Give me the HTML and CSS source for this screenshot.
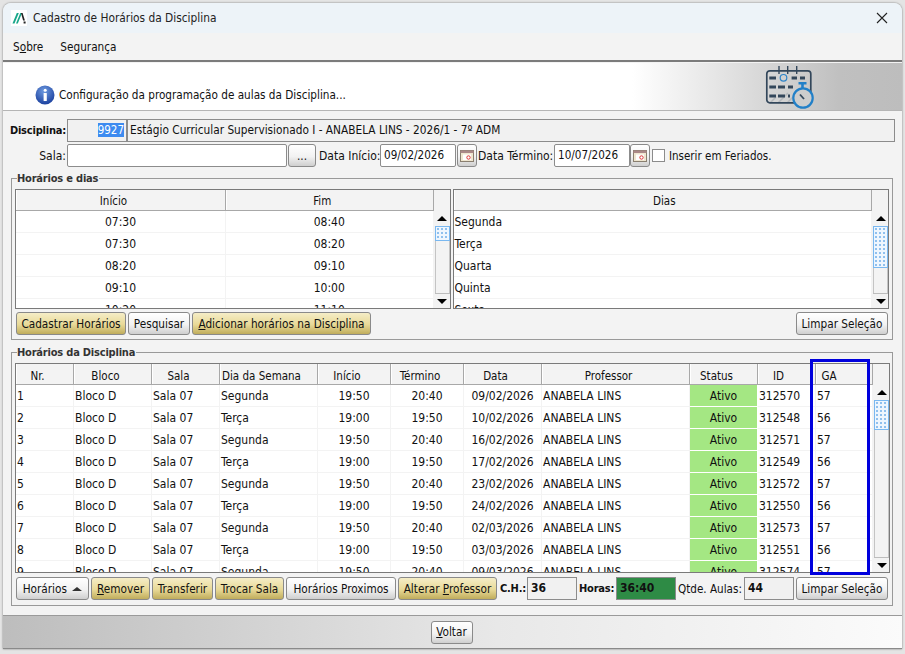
FILE: index.html
```html
<!DOCTYPE html>
<html lang="pt-BR">
<head>
<meta charset="utf-8">
<title>Cadastro de Horários da Disciplina</title>
<link rel="stylesheet" href="styles.css">
</head>
<body>
<div class="win">
  <header class="title">
    <svg class="logo" width="16" height="16" viewBox="0 0 16 16"><path d="M1.500 13.500 5.800 3h2L3.500 13.500z" fill="#17a689"/><path d="M5 13.500 9.300 3h1.700L6.800 13.500z" fill="#17a689"/><path d="M10 3h1.600l2.300 7.500h-1.800z" fill="#222"/><rect x="12.600" y="11.500" width="2" height="2" fill="#222"/></svg>
    <span class="title-text">Cadastro de Horários da Disciplina</span>
    <svg class="close" width="12" height="12" viewBox="0 0 12 12"><path d="M1 1 11 11M11 1 1 11" stroke="#222" stroke-width="1.100" fill="none"/></svg>
  </header>
  <nav class="menu"><span>S<u>o</u>bre</span><span>Segurança</span></nav>
  <section class="banner">
    <svg class="info" width="20" height="20" viewBox="0 0 20 20"><defs><radialGradient id="ig" cx="45%" cy="30%" r="75%"><stop offset="0" stop-color="#6f9be0"/><stop offset="1" stop-color="#153a9a"/></radialGradient></defs><circle cx="10" cy="10" r="9.500" fill="url(#ig)"/><circle cx="10.200" cy="5.300" r="1.500" fill="#fff"/><rect x="8.600" y="8" width="3.200" height="8" rx=".6" fill="#fff"/></svg>
    <span class="banner-text">Configuração da programação de aulas da Disciplina...</span>
    <svg class="cal-art" width="50" height="44" viewBox="0 0 50 44">
      <path d="M5 38 11 32M13 38 23 28M22 38 30 30" stroke="#b4b8bb" stroke-width="1.500" fill="none"/>
      <rect x="1.800" y="5.800" width="44" height="32" rx="3" fill="none" stroke="#33475b" stroke-width="1.700"/>
      <path d="M14 1v8M22.700 1v8M31.700 1v8" stroke="#33475b" stroke-width="1.400" fill="none"/>
      <g fill="#33475b"><rect x="4.300" y="11.500" width="6.700" height="3"/><rect x="26.600" y="11.500" width="5.400" height="3"/><rect x="35" y="11.500" width="5" height="3"/><rect x="4.300" y="20.500" width="6.700" height="3"/><rect x="13" y="20.500" width="7" height="3"/><rect x="23" y="20.500" width="5" height="3"/><rect x="4.300" y="29.500" width="6.700" height="3"/><rect x="13" y="29.500" width="7" height="3"/><rect x="23" y="29.500" width="2" height="3"/></g>
      <circle cx="18.500" cy="12.800" r="3.300" fill="none" stroke="#2d84c9" stroke-width="1.200"/>
      <circle cx="38" cy="33" r="9.700" fill="#cdcdcd" stroke="#2280c8" stroke-width="2.200"/>
      <path d="M33.500 17h8v2.500h-2.700v3.500h-2.600v-3.500h-2.700z" fill="#2280c8"/>
      <path d="M35 29.500 39 34" stroke="#33475b" stroke-width="1.800"/>
    </svg>
  </section>
  <main class="form">
    <div class="row-a">
      <label class="lbl strong lbl-a">Disciplina:</label>
      <div class="box code"><mark>9927</mark></div>
      <div class="box desc">Estágio Curricular Supervisionado I - ANABELA LINS - 2026/1 - 7º ADM</div>
    </div>
    <div class="row-b">
      <label class="lbl lbl-a">Sala:</label>
      <div class="input i-sala"></div>
      <button class="btn b-dots">...</button>
      <label class="lbl l-ini">Data Início:</label>
      <div class="input i-date">09/02/2026</div>
      <button class="btn b-cal"><svg width="14" height="12" viewBox="0 0 14 12"><rect x=".5" y=".5" width="13" height="11" fill="#efe6d0" stroke="#8a7f70"/><rect x=".5" y=".5" width="13" height="2.500" fill="#a88"/><rect x="3" y="4.500" width="8" height="5.500" fill="#fff"/><circle cx="8.500" cy="7.500" r="1.700" fill="none" stroke="#d33" stroke-width="1"/></svg></button>
      <label class="lbl l-ter">Data Término:</label>
      <div class="input i-date">10/07/2026</div>
      <button class="btn b-cal b-cal2"><svg width="14" height="12" viewBox="0 0 14 12"><rect x=".5" y=".5" width="13" height="11" fill="#efe6d0" stroke="#8a7f70"/><rect x=".5" y=".5" width="13" height="2.500" fill="#a88"/><rect x="3" y="4.500" width="8" height="5.500" fill="#fff"/><circle cx="8.500" cy="7.500" r="1.700" fill="none" stroke="#d33" stroke-width="1"/></svg></button>
      <span class="check"></span>
      <label class="lbl l-fer">Inserir em Feriados.</label>
    </div>

    <section class="group g1">
      <h2 class="legend">Horários e dias</h2>
      <div class="tables">
        <div class="grid t-hor">
          <div class="grid-body">
            <table>
              <thead><tr><th>Início</th><th>Fim</th></tr></thead>
              <tbody class="center">
                <tr><td>07:30</td><td>08:40</td></tr>
                <tr><td>07:30</td><td>08:20</td></tr>
                <tr><td>08:20</td><td>09:10</td></tr>
                <tr><td>09:10</td><td>10:00</td></tr>
                <tr><td>10:20</td><td>11:10</td></tr>
              </tbody>
            </table>
          </div>
          <div class="scroll"><i class="up"></i><b class="thumb th-hor"></b><i class="track"></i><i class="down"></i></div>
        </div>
        <div class="grid t-dias">
          <div class="grid-body">
            <table>
              <thead><tr><th>Dias</th></tr></thead>
              <tbody>
                <tr><td>Segunda</td></tr>
                <tr><td>Terça</td></tr>
                <tr><td>Quarta</td></tr>
                <tr><td>Quinta</td></tr>
                <tr><td>Sexta</td></tr>
              </tbody>
            </table>
          </div>
          <div class="scroll"><i class="up"></i><b class="thumb th-dias"></b><i class="track"></i><i class="down"></i></div>
        </div>
      </div>
      <div class="actions">
        <button class="btn gold w-cad">Cadastrar Horários</button>
        <button class="btn w-pes">Pesquisar</button>
        <button class="btn gold w-adi"><u>A</u>dicionar horários na Disciplina</button>
        <button class="btn w-lim push">Limpar Seleção</button>
      </div>
    </section>

    <section class="group g2">
      <h2 class="legend">Horários da Disciplina</h2>
      <div class="grid t-main">
        <div class="grid-body">
          <table>
            <thead><tr><th>Nr.</th><th>Bloco</th><th>Sala</th><th>Dia da Semana</th><th>Início</th><th>Término</th><th>Data</th><th>Professor</th><th>Status</th><th>ID</th><th>GA</th></tr></thead>
            <tbody>
              <tr><td>1</td><td>Bloco D</td><td>Sala 07</td><td>Segunda</td><td class="c">19:50</td><td class="c">20:40</td><td class="c">09/02/2026</td><td>ANABELA LINS</td><td class="st">Ativo</td><td>312570</td><td>57</td></tr>
              <tr><td>2</td><td>Bloco D</td><td>Sala 07</td><td>Terça</td><td class="c">19:00</td><td class="c">19:50</td><td class="c">10/02/2026</td><td>ANABELA LINS</td><td class="st">Ativo</td><td>312548</td><td>56</td></tr>
              <tr><td>3</td><td>Bloco D</td><td>Sala 07</td><td>Segunda</td><td class="c">19:50</td><td class="c">20:40</td><td class="c">16/02/2026</td><td>ANABELA LINS</td><td class="st">Ativo</td><td>312571</td><td>57</td></tr>
              <tr><td>4</td><td>Bloco D</td><td>Sala 07</td><td>Terça</td><td class="c">19:00</td><td class="c">19:50</td><td class="c">17/02/2026</td><td>ANABELA LINS</td><td class="st">Ativo</td><td>312549</td><td>56</td></tr>
              <tr><td>5</td><td>Bloco D</td><td>Sala 07</td><td>Segunda</td><td class="c">19:50</td><td class="c">20:40</td><td class="c">23/02/2026</td><td>ANABELA LINS</td><td class="st">Ativo</td><td>312572</td><td>57</td></tr>
              <tr><td>6</td><td>Bloco D</td><td>Sala 07</td><td>Terça</td><td class="c">19:00</td><td class="c">19:50</td><td class="c">24/02/2026</td><td>ANABELA LINS</td><td class="st">Ativo</td><td>312550</td><td>56</td></tr>
              <tr><td>7</td><td>Bloco D</td><td>Sala 07</td><td>Segunda</td><td class="c">19:50</td><td class="c">20:40</td><td class="c">02/03/2026</td><td>ANABELA LINS</td><td class="st">Ativo</td><td>312573</td><td>57</td></tr>
              <tr><td>8</td><td>Bloco D</td><td>Sala 07</td><td>Terça</td><td class="c">19:00</td><td class="c">19:50</td><td class="c">03/03/2026</td><td>ANABELA LINS</td><td class="st">Ativo</td><td>312551</td><td>56</td></tr>
              <tr><td>9</td><td>Bloco D</td><td>Sala 07</td><td>Segunda</td><td class="c">19:50</td><td class="c">20:40</td><td class="c">09/03/2026</td><td>ANABELA LINS</td><td class="st">Ativo</td><td>312574</td><td>57</td></tr>
            </tbody>
          </table>
        </div>
        <div class="scroll"><i class="up"></i><b class="thumb th-main"></b><i class="track"></i><i class="down"></i></div>
      </div>
      <div class="actions act2">
        <button class="btn w-hor">Horários <span class="tri"></span></button>
        <button class="btn gold w-rem"><u>R</u>emover</button>
        <button class="btn gold w-tra">Transferir</button>
        <button class="btn gold w-tro">Trocar Sala</button>
        <button class="btn w-pro">Horários Proximos</button>
        <button class="btn gold w-alt">Alterar <u>P</u>rofessor</button>
        <label class="lbl strong l-ch">C.H.:</label><div class="stat">36</div>
        <label class="lbl strong l-ho">Horas:</label><div class="stat green">36:40</div>
        <label class="lbl l-qt">Qtde. Aulas:</label><div class="stat">44</div>
        <button class="btn w-lim">Limpar Seleção</button>
      </div>
      <div class="highlight"></div>
    </section>
  </main>
  <footer class="foot"><button class="btn w-vol"><u>V</u>oltar</button></footer>
</div>
</body>
</html>
```
FILE: styles.css
```css
* { box-sizing: border-box; }
html, body { margin: 0; height: 100%; }
body {
  background: #e4e4e4;
  padding: 3px 3px 0;
  overflow: hidden;
  font: 12px/16px "DejaVu Sans Condensed", "Noto Sans", sans-serif;
  color: #111;
}
.win {
  width: 899px;
  height: 646px;
  display: flex;
  flex-direction: column;
  background: #f3f3f3;
  border-radius: 8px 8px 0 0;
  box-shadow: 0 0 2px #666;
  overflow: hidden;
}
.title {
  flex: none;
  height: 30px;
  margin-bottom: 1px;
  padding: 0 14px 0 8px;
  display: flex;
  align-items: center;
  background: #edf3f8;
}
.logo { flex: none; background: #fff; margin-right: 6px; }
.title-text { flex: 1; font-size: 11.800px; color: #222; }
.menu {
  flex: none;
  height: 28px;
  padding-left: 10px;
  display: flex;
  align-items: center;
  gap: 17px;
  font-size: 11.700px;
  background: #f3f3f3;
  border-bottom: 2px solid #7b7b7b;
}
.banner {
  flex: none;
  height: 48px;
  margin-top: 1px;
  padding-left: 32px;
  display: flex;
  align-items: center;
  background: linear-gradient(90deg, #fff 0, #fff 70%, #c0c0c0 93%, #bdbdbd 100%);
  border-bottom: 1px solid #b5b5b5;
}
.info { flex: none; margin: 16px 4px 0 0; }
.banner-text { flex: none; width: 706px; margin-top: 16px; font-size: 11.650px; }
.cal-art { flex: none; }
.form { flex: 1; min-height: 0; padding-top: 8px; background: #f3f3f3; }
.lbl { flex: none; white-space: nowrap; }
.strong { font-weight: 700; font-size: 11px; letter-spacing: -.2px; }
.lbl-a { width: 63px; text-align: right; margin-right: 1px; }
.row-a, .row-b { display: flex; align-items: center; }
.row-a { height: 23px; }
.row-b { height: 23px; margin-top: 2px; }
.box {
  height: 23px;
  border: 1px solid #8c8c8c;
  background: #f1f1f1;
  padding: 2px 3px;
  white-space: nowrap;
}
.code { width: 60px; text-align: right; padding-right: 2px; font-size: 11.500px; }
.code mark { background: #3d8bf0; color: #fff; }
.desc { width: 768px; padding-left: 2px; font-size: 11.750px; }
.input {
  height: 23px;
  border: 1px solid #8c8c8c;
  border-radius: 2px;
  background: #fff;
  padding: 2px 3px;
  font-size: 11.600px;
}
.i-sala { width: 220px; }
.i-date { width: 76px; }
.l-ini { margin: 0 2px 0 3px; width: 59px; }
.l-ter { margin: 0 2px 0 1px; width: 74px; }
.l-fer { font-size: 11.500px; }
.check { flex: none; width: 13px; height: 13px; margin: 0 4px 0 2px; border: 1px solid #8c8c8c; background: #fff; }
.btn {
  height: 23px;
  flex: none;
  padding: 0;
  border: 1px solid #8a8a8a;
  border-radius: 3px;
  font: inherit;
  font-size: 11.700px;
  color: #111;
  background: linear-gradient(180deg, #fff 0, #f2f2f2 55%, #cfcfcf 100%);
  white-space: nowrap;
  text-align: center;
}
.btn svg { display: block; margin: 0 auto; }
.gold { background: linear-gradient(180deg, #f5edc7 0, #e8d997 55%, #c0ad5c 100%); }
.b-dots { width: 28px; margin-left: 1px; }
.b-cal { width: 20px; margin-left: 1px; }
.b-cal2 { margin-left: 0; }
.group {
  position: relative;
  margin-left: 8px;
  width: 882px;
  border: 1px solid #999;
  padding: 10px 3px 0;
}
.g1 { height: 162px; margin-top: 11px; }
.g2 { height: 254px; margin-top: 12px; }
.legend {
  position: absolute;
  top: -8px;
  left: 5px;
  margin: 0;
  padding: 0 1px 0 0;
  font: inherit;
  font-weight: 700;
  font-size: 11px;
  letter-spacing: -.2px;
  color: #333;
  background: #f3f3f3;
}
.tables { display: flex; gap: 2px; height: 120px; }
.grid {
  display: flex;
  border: 1px solid #7a7a7a;
  background: #f3f3f3;
  overflow: hidden;
}
.t-hor { width: 436px; }
.t-dias { width: 437px; }
.t-main { width: 875px; height: 210px; }
.grid-body { flex: 1; min-width: 0; overflow: hidden; }
table { border-collapse: separate; border-spacing: 0; table-layout: fixed; width: 100%; }
th {
  height: 21px;
  padding: 2px 14px 0 0;
  font-weight: 400;
  font-size: 11.500px;
  text-align: center;
  background: #f3f3f3;
  border: 1px solid #a8a8a8;
  border-width: 0 1px 1px 0;
  box-shadow: inset 1px 0 0 #fff;
}
.t-main th { padding-top: 4px; }
.t-dias th { padding: 1px 0 0 4px; }
td {
  height: 22px;
  padding: 0 1px;
  background: #fff;
  border-right: 1px solid #f3f3f3;
  border-bottom: 1px solid #f3f3f3;
  white-space: nowrap;
  overflow: hidden;
}
.center td, td.c { text-align: center; }
td.st { background: #a4e783; text-align: center; border-bottom-color: #fff; border-right-color: #fff; }
.scroll {
  flex: none;
  width: 15px;
  margin-left: 1px;
  padding-top: 21px;
  display: flex;
  flex-direction: column;
  background: #f3f3f3;
}
.up, .down {
  flex: none;
  height: 15px;
  display: flex;
  align-items: center;
  justify-content: center;
  background: #f3f3f3;
}
.up::before, .down::before { content: ""; border: 5px solid transparent; }
.up::before { border-bottom: 5px solid #000; border-top: 0; }
.down::before { border-top: 5px solid #000; border-bottom: 0; }
.down { border-top: 1px solid #bdbdbd; }
.track { flex: 1; display: block; background: #f3f3f3; border-left: 1px solid #c4c4c4; border-right: 1px solid #c4c4c4; }
.thumb {
  display: block;
  flex: none;
  background-color: #eef6fe;
  background-image: radial-gradient(#8fc0ee .8px, transparent 1px);
  background-size: 4px 4px;
  border: 1px solid #7ab8f0;
}
.th-hor { height: 15px; }
.th-dias { height: 42px; }
.th-main { height: 30px; }
.t-hor th:nth-child(1) { width: 210px; }
.t-main th:nth-child(1) { width: 58px; }
.t-main th:nth-child(2) { width: 78px; }
.t-main th:nth-child(3) { width: 68px; }
.t-main th:nth-child(4) { width: 98px; }
.t-main th:nth-child(5) { width: 73px; }
.t-main th:nth-child(6) { width: 73px; }
.t-main th:nth-child(7) { width: 78px; }
.t-main th:nth-child(8) { width: 148px; }
.t-main th:nth-child(9) { width: 68px; }
.t-main th:nth-child(10) { width: 58px; padding-right: 16px; }
.t-main th:nth-child(11) { padding-right: 30px; }
.actions { display: flex; align-items: center; gap: 2px; margin-top: 3px; padding-left: 1px; }
.act2 { margin-top: 4px; }
.push { margin-left: auto; margin-right: 1px; }
.l-ch { margin-left: 1px; width: 25px; }
.l-ho { width: 35px; }
.l-qt { width: 64px; font-size: 11.600px; }
.w-cad { width: 110px; }
.w-pes { width: 62px; }
.w-adi { width: 179px; }
.w-lim { width: 92px; }
.w-hor { width: 73px; }
.w-rem { width: 59px; }
.w-tra { width: 61px; }
.w-tro { width: 69px; }
.w-pro { width: 110px; }
.w-alt { width: 99px; }
.w-vol { width: 42px; height: 23px; }
.tri { display: inline-block; margin-left: 2px; vertical-align: 2px; border: 5px solid transparent; border-bottom: 4px solid #333; border-top: 0; }
.stat {
  flex: none;
  width: 50px;
  height: 23px;
  border: 1px solid #8c8c8c;
  background: #f1f1f1;
  padding: 2px 3px;
  font-weight: 700;
}
.green { width: 60px; background: #2e8b45; }
.highlight {
  position: absolute;
  top: 6px;
  left: 798px;
  width: 60px;
  height: 216px;
  border: 3px solid #0000dd;
  pointer-events: none;
}
.foot {
  flex: none;
  height: 34px;
  display: flex;
  justify-content: center;
  align-items: center;
  background: linear-gradient(90deg, #bdbdbd 0, #e8e8e8 55%, #fbfbfb 100%);
  border-top: 1px solid #9a9a9a;
  border-bottom: 1px solid #8a8a8a;
  padding-right: 2px;
}
```
